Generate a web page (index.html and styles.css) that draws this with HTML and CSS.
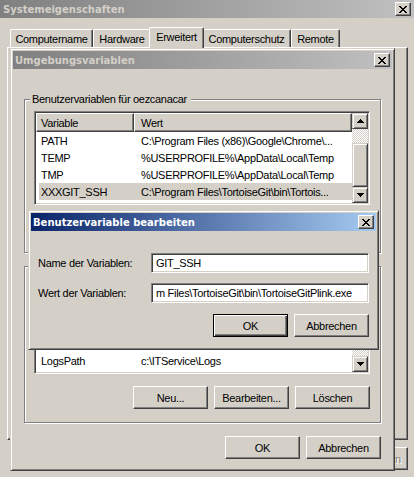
FILE: index.html
```html
<!DOCTYPE html>
<html lang="de">
<head>
<meta charset="utf-8">
<title>Systemeigenschaften</title>
<link rel="stylesheet" href="styles.css">
</head>
<body>

<section class="win win-sys">
  <div class="title inactive">
    <span class="title-text">Systemeigenschaften</span>
    <span class="close"><svg width="8" height="7" viewBox="0 0 8 7"><path d="M0 0h2v1H0zM6 0h2v1H6zM1 1h2v1H1zM5 1h2v1H5zM2 2h4v1H2zM3 3h2v1H3zM2 4h4v1H2zM1 5h2v1H1zM5 5h2v1H5zM0 6h2v1H0zM6 6h2v1H6z" fill="#000"/></svg></span>
  </div>
  <div class="sys-body">
    <div class="tabs">
      <div class="tab w-comp">Computername</div>
      <div class="tab w-hw">Hardware</div>
      <div class="tab tab-sel">Erweitert</div>
      <div class="tab w-cs">Computerschutz</div>
      <div class="tab w-rem">Remote</div>
    </div>
    <div class="tab-panel"></div>
    <div class="btn-row sys-btns">
      <div class="btn"></div>
      <div class="btn"></div>
      <div class="btn disabled">Übernehmen</div>
    </div>
  </div>
</section>

<section class="win win-env">
  <div class="title inactive">
    <span class="title-text">Umgebungsvariablen</span>
    <span class="close"><svg width="8" height="7" viewBox="0 0 8 7"><path d="M0 0h2v1H0zM6 0h2v1H6zM1 1h2v1H1zM5 1h2v1H5zM2 2h4v1H2zM3 3h2v1H3zM2 4h4v1H2zM1 5h2v1H1zM5 5h2v1H5zM0 6h2v1H0zM6 6h2v1H6z" fill="#000"/></svg></span>
  </div>
  <div class="env-body">
    <div class="group group-user">
      <span class="legend">Benutzervariablen für oezcanacar</span>
      <div class="list">
        <div class="list-main">
          <div class="lv-header">
            <div class="hcell hc1">Variable</div>
            <div class="hcell hc2">Wert</div>
          </div>
          <div class="row"><span class="c1">PATH</span><span class="c2">C:\Program Files (x86)\Google\Chrome\...</span></div>
          <div class="row"><span class="c1">TEMP</span><span class="c2">%USERPROFILE%\AppData\Local\Temp</span></div>
          <div class="row"><span class="c1">TMP</span><span class="c2">%USERPROFILE%\AppData\Local\Temp</span></div>
          <div class="row sel"><span class="c1">XXXGIT_SSH</span><span class="c2">C:\Program Files\TortoiseGit\bin\Tortois...</span></div>
        </div>
        <div class="sbar">
          <div class="sbtn"><svg width="7" height="4" viewBox="0 0 7 4"><path d="M3 0h1v1H3zM2 1h3v1H2zM1 2h5v1H1zM0 3h7v1H0z" fill="#000"/></svg></div>
          <div class="track user-track-top"></div>
          <div class="thumb user-thumb"></div>
          <div class="sbtn"><svg width="7" height="4" viewBox="0 0 7 4"><path d="M0 0h7v1H0zM1 1h5v1H1zM2 2h3v1H2zM3 3h1v1H3z" fill="#000"/></svg></div>
        </div>
      </div>
      <div class="btn-row grp-btns">
        <div class="btn"></div>
        <div class="btn"></div>
        <div class="btn"></div>
      </div>
    </div>

    <div class="group group-sys">
      <div class="list">
        <div class="list-main">
          <div class="lv-header">
            <div class="hcell hc1"></div>
            <div class="hcell hc2"></div>
          </div>
          <div class="rows-above"></div>
          <div class="row"><span class="c1">LogsPath</span><span class="c2">c:\ITService\Logs</span></div>
        </div>
        <div class="sbar">
          <div class="sbtn"><svg width="7" height="4" viewBox="0 0 7 4"><path d="M3 0h1v1H3zM2 1h3v1H2zM1 2h5v1H1zM0 3h7v1H0z" fill="#000"/></svg></div>
          <div class="thumb sys-thumb"></div>
          <div class="track track-fill"></div>
          <div class="sbtn"><svg width="7" height="4" viewBox="0 0 7 4"><path d="M0 0h7v1H0zM1 1h5v1H1zM2 2h3v1H2zM3 3h1v1H3z" fill="#000"/></svg></div>
        </div>
      </div>
      <div class="btn-row grp-btns">
        <div class="btn">Neu...</div>
        <div class="btn">Bearbeiten...</div>
        <div class="btn">Löschen</div>
      </div>
    </div>

    <div class="btn-row env-btns">
      <div class="btn">OK</div>
      <div class="btn">Abbrechen</div>
    </div>
  </div>
</section>

<section class="win win-edit">
  <div class="title active">
    <span class="title-text">Benutzervariable bearbeiten</span>
    <span class="close"><svg width="8" height="7" viewBox="0 0 8 7"><path d="M0 0h2v1H0zM6 0h2v1H6zM1 1h2v1H1zM5 1h2v1H5zM2 2h4v1H2zM3 3h2v1H3zM2 4h4v1H2zM1 5h2v1H1zM5 5h2v1H5zM0 6h2v1H0zM6 6h2v1H6z" fill="#000"/></svg></span>
  </div>
  <div class="edit-body">
    <div class="form-row">
      <span class="label">Name der Variablen:</span>
      <div class="input">GIT_SSH</div>
    </div>
    <div class="form-row row-gap">
      <span class="label">Wert der Variablen:</span>
      <div class="input">m Files\TortoiseGit\bin\TortoiseGitPlink.exe</div>
    </div>
    <div class="btn-row edit-btns">
      <div class="btn default">OK</div>
      <div class="btn">Abbrechen</div>
    </div>
  </div>
</section>

</body>
</html>
```

FILE: styles.css
```css
* { box-sizing: border-box; }
html, body { margin: 0; padding: 0; }
body {
  width: 414px;
  height: 477px;
  overflow: hidden;
  position: relative;
  background: #d4d0c8;
  font-family: "Liberation Sans", Arial, sans-serif;
  font-size: 11px;
  letter-spacing: -0.3px;
  color: #000;
}

/* ---------- windows ---------- */
.win {
  position: absolute;
  display: flex;
  flex-direction: column;
  background: #d4d0c8;
  border: 1px solid;
  border-color: #d4d0c8 #404040 #404040 #d4d0c8;
  box-shadow: inset 1px 1px 0 #fff, inset -1px -1px 0 #808080;
  padding: 2px;
}
.win-sys { left: -3px; top: -3px; width: 420px; height: 500px; }
.win-env { left: 10px; top: 48px; width: 385px; height: 423px; }
.win-edit { left: 28px; top: 210px; width: 351px; height: 140px; }

.title {
  flex: none;
  height: 18px;
  margin-bottom: 1px;
  display: flex;
  align-items: center;
  justify-content: space-between;
  padding: 0 2px 0 2px;
  font-family: "DejaVu Sans", sans-serif;
  font-weight: bold;
  font-size: 10px;
  letter-spacing: 0;
  white-space: nowrap;
}
.title.inactive { background: linear-gradient(to right, #808080, #c0c0c0); color: #d4d0c8; }
.title.active { background: linear-gradient(to right, #0a246a, #a6caf0); color: #fff; }
.win-sys .title { padding-left: 3px; padding-right: 3px; }

.close {
  width: 16px;
  height: 14px;
  display: flex;
  align-items: center;
  justify-content: center;
  background: #d4d0c8;
  border: 1px solid;
  border-color: #fff #404040 #404040 #fff;
  box-shadow: inset -1px -1px 0 #808080;
}
.close svg { display: block; }

/* ---------- buttons ---------- */
.btn-row { display: flex; justify-content: flex-end; gap: 6px; }
.btn {
  width: 75px;
  height: 23px;
  display: flex;
  align-items: center;
  justify-content: center;
  background: #d4d0c8;
  border: 1px solid;
  border-color: #fff #404040 #404040 #fff;
  box-shadow: inset -1px -1px 0 #808080;
  white-space: nowrap;
}
.btn.default {
  border-color: #000;
  box-shadow: inset 1px 1px 0 #fff, inset -1px -1px 0 #404040, inset -2px -2px 0 #808080;
}
.btn.disabled { color: #808080; text-shadow: 1px 1px 0 #fff; }

/* ---------- Systemeigenschaften ---------- */
.sys-body { display: flex; flex-direction: column; padding: 8px 6px 0 7px; }
.tabs { display: flex; align-items: flex-end; height: 20px; padding-left: 3px; }
.tab {
  height: 18px;
  display: flex;
  align-items: center;
  justify-content: center;
  padding-top: 1px;
  border-top: 1px solid #fff;
  border-left: 1px solid #fff;
  border-right: 1px solid #404040;
  border-radius: 2px 2px 0 0;
  box-shadow: inset -1px 0 0 #808080;
  white-space: nowrap;
}
.w-comp { width: 83px; }
.w-hw { width: 58px; }
.w-cs { width: 89px; }
.w-rem { width: 49px; }
.tab-sel {
  width: 55px;
  height: 21px;
  margin: 0 -2px -1px;
  padding-top: 0;
  padding-bottom: 3px;
  position: relative;
  z-index: 1;
  background: #d4d0c8;
}
.tab-panel {
  height: 393px;
  border: 1px solid;
  border-color: #fff #404040 #404040 #fff;
  box-shadow: inset -1px -1px 0 #808080;
}
.sys-btns { margin-top: 7px; }

/* ---------- Umgebungsvariablen ---------- */
.env-body { display: flex; flex-direction: column; padding: 0 11px; }
.group {
  position: relative;
  border: 1px solid #808080;
  box-shadow: 1px 1px 0 #fff, inset 1px 1px 0 #fff;
  padding: 11px 10px 12px 9px;
}
.group-user { margin-top: 29px; }
.group-sys { margin-top: 13px; padding-top: 13px; padding-bottom: 13px; }
.legend {
  position: absolute;
  left: 5px;
  top: -7px;
  padding: 0 4px 0 2px;
  background: #d4d0c8;
  line-height: 13px;
  white-space: nowrap;
}
.grp-btns { margin-top: 12px; }
.env-btns { margin-top: 13px; }

.list {
  height: 94px;
  display: flex;
  padding: 1px;
  background: #fff;
  border: 1px solid;
  border-color: #808080 #fff #fff #808080;
  box-shadow: inset 1px 1px 0 #404040, inset -1px -1px 0 #d4d0c8;
}
.list-main { flex: 1; min-width: 0; display: flex; flex-direction: column; overflow: hidden; }
.lv-header { display: flex; height: 19px; flex: none; }
.hcell {
  display: flex;
  align-items: center;
  background: #d4d0c8;
  border: 1px solid;
  border-color: #fff #404040 #404040 #fff;
  box-shadow: inset -1px -1px 0 #808080;
  white-space: nowrap;
}
.hc1 { width: 98px; padding-left: 4px; }
.hc2 { flex: 1; padding-left: 6px; }
.rows-above { height: 51px; flex: none; }
.row { display: flex; align-items: center; height: 17px; flex: none; margin-left: 3px; white-space: nowrap; }
.row.sel { background: #d4d0c8; }
.c1 { width: 95px; padding-left: 2px; overflow: hidden; }
.c2 { flex: 1; padding-left: 7px; overflow: hidden; }

.sbar { width: 16px; flex: none; display: flex; flex-direction: column; }
.sbtn, .thumb {
  background: #d4d0c8;
  border: 1px solid;
  border-color: #d4d0c8 #404040 #404040 #d4d0c8;
  box-shadow: inset 1px 1px 0 #fff, inset -1px -1px 0 #808080;
}
.sbtn { height: 16px; flex: none; display: flex; align-items: center; justify-content: center; }
.sbtn svg { display: block; }
.track { background: repeating-conic-gradient(#d4d0c8 0% 25%, #fff 0% 50%) 0 0 / 2px 2px; }
.user-track-top { height: 14px; flex: none; }
.user-thumb { height: 44px; flex: none; }
.sys-thumb { height: 30px; flex: none; }
.track-fill { flex: 1; }

/* ---------- Benutzervariable bearbeiten ---------- */
.edit-body { display: flex; flex-direction: column; padding: 21px 7px 0 7px; }
.form-row { display: flex; align-items: center; height: 20px; }
.row-gap { margin-top: 10px; }
.label { width: 113px; flex: none; white-space: nowrap; }
.input {
  flex: 1;
  height: 20px;
  display: flex;
  align-items: center;
  padding: 0 3px 0 4px;
  background: #fff;
  border: 1px solid;
  border-color: #808080 #fff #fff #808080;
  box-shadow: inset 1px 1px 0 #404040, inset -1px -1px 0 #d4d0c8;
  white-space: nowrap;
  overflow: hidden;
}
.edit-btns { margin-top: 11px; }
```
